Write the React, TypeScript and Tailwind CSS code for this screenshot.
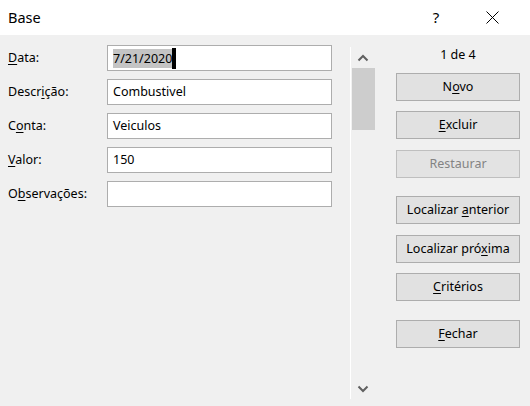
import * as React from 'react'

const font = { fontFamily: '"Noto Sans", "Segoe UI", sans-serif' }

function Field({ label, value, selected, top }: { label: React.ReactNode; value?: string; selected?: boolean; top: string }) {
    return (
        <div className={`flex items-center h-[26px] ${top}`}>
            <div className="w-[107px] pl-[8px] text-[12.5px] text-black">
                <span>{label}</span>
            </div>
            <div className="relative w-[225px] h-[26px] border border-[#adadad] bg-white flex items-center pl-[5px] text-[12.5px] text-black">
                {selected ? (
                    <span className="flex items-center h-[19px]">
                        <span className="bg-[#c4c4c4] h-[19px] leading-[19px]">{value}</span>
                        <span className="w-[4px] h-[21px] bg-black" />
                    </span>
                ) : (
                    <span>{value}</span>
                )}
            </div>
        </div>
    )
}

function Btn({ children, top, disabled }: { children: React.ReactNode; top: string; disabled?: boolean }) {
    return (
        <div
            className={`w-[124px] h-[28px] border flex items-center justify-center text-[12.5px] ${top} ${
                disabled ? 'border-[#bfbfbf] bg-[#e3e3e3] text-[#838383]' : 'border-[#adadad] bg-[#e1e1e1] text-black'
            }`}
        >
            <span>{children}</span>
        </div>
    )
}

const U = ({ children }: { children: React.ReactNode }) => <u className="underline-offset-[2px]">{children}</u>

export default function App() {
    return (
        <div className="w-[530px] h-[406px] bg-[#f0f0f0] flex flex-col" style={font}>
            <div className="h-[35px] bg-white flex items-center shrink-0">
                <div className="pl-[8px] text-[14.5px] text-black flex-1">Base</div>
                <div className="w-[16px] text-center text-[15px] text-black mr-[42px]">?</div>
                <svg width="13" height="13" viewBox="0 0 13 13" className="mr-[31px]">
                    <path d="M0.5 0.5 L12.5 12.5 M12.5 0.5 L0.5 12.5" stroke="#000" strokeWidth="1" />
                </svg>
            </div>
            <div className="flex flex-1">
                <div className="w-[350px] flex flex-col">
                    <Field top="mt-[10px]" label={<><U>D</U>ata:</>} value="7/21/2020" selected />
                    <Field top="mt-[8px]" label={<>Descr<U>i</U>ção:</>} value="Combustivel" />
                    <Field top="mt-[8px]" label={<>C<U>o</U>nta:</>} value="Veiculos" />
                    <Field top="mt-[8px]" label={<><U>V</U>alor:</>} value="150" />
                    <Field top="mt-[8px]" label={<>O<U>b</U>servações:</>} value="" />
                </div>
                <div className="w-[25px] mt-[12px] h-[352px] flex">
                    <div className="w-[1px] bg-white" />
                    <div className="w-[24px] flex flex-col items-center">
                        <svg width="12" height="8" viewBox="0 0 12 8" className="mt-[7px]">
                            <path d="M1.5 6.5 L6 2 L10.5 6.5" stroke="#606060" strokeWidth="2" fill="none" />
                        </svg>
                        <div className="w-[23px] h-[62px] bg-[#cdcdcd] mt-[6px]" />
                        <div className="flex-1" />
                        <svg width="12" height="8" viewBox="0 0 12 8" className="mb-[6px]">
                            <path d="M1.5 1.5 L6 6 L10.5 1.5" stroke="#606060" strokeWidth="2" fill="none" />
                        </svg>
                    </div>
                </div>
                <div className="flex flex-col pl-[21px]">
                    <div className="w-[124px] text-center text-[12.5px] text-black mt-[11px] h-[17px] leading-[17px]">1 de 4</div>
                    <Btn top="mt-[10px]">N<U>o</U>vo</Btn>
                    <Btn top="mt-[10px]"><U>E</U>xcluir</Btn>
                    <Btn top="mt-[11px]" disabled>Restaurar</Btn>
                    <Btn top="mt-[18px]">Localizar <U>a</U>nterior</Btn>
                    <Btn top="mt-[11px]">Localizar pró<U>x</U>ima</Btn>
                    <Btn top="mt-[10px]"><U>C</U>ritérios</Btn>
                    <Btn top="mt-[19px]"><U>F</U>echar</Btn>
                </div>
            </div>
        </div>
    )
}
